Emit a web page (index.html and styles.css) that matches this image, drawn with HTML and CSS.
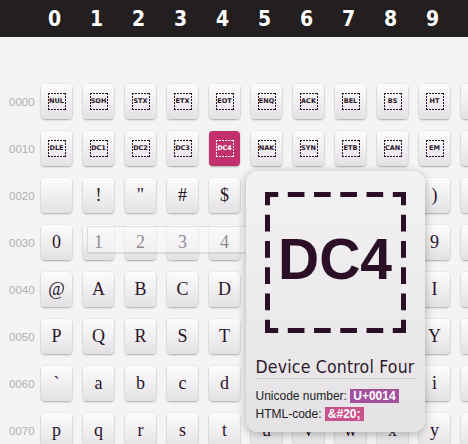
FILE: index.html
```html
<!DOCTYPE html>
<html>
<head>
<meta charset="utf-8">
<link rel="stylesheet" href="styles.css">
</head>
<body>
<header class="head">
  <span>0</span><span>1</span><span>2</span><span>3</span><span>4</span><span>5</span><span>6</span><span>7</span><span>8</span><span>9</span>
</header>
<main class="table">
  <div class="row"><span class="lbl">0000</span>
    <div class="key"><span class="cb">NUL</span></div><div class="key"><span class="cb">SOH</span></div><div class="key"><span class="cb">STX</span></div><div class="key"><span class="cb">ETX</span></div><div class="key"><span class="cb">EOT</span></div><div class="key"><span class="cb">ENQ</span></div><div class="key"><span class="cb">ACK</span></div><div class="key"><span class="cb">BEL</span></div><div class="key"><span class="cb">BS</span></div><div class="key"><span class="cb">HT</span></div><div class="key"></div>
  </div>
  <div class="row"><span class="lbl">0010</span>
    <div class="key"><span class="cb">DLE</span></div><div class="key"><span class="cb">DC1</span></div><div class="key"><span class="cb">DC2</span></div><div class="key"><span class="cb">DC3</span></div><div class="key active"><span class="cb">DC4</span></div><div class="key"><span class="cb">NAK</span></div><div class="key"><span class="cb">SYN</span></div><div class="key"><span class="cb">ETB</span></div><div class="key"><span class="cb">CAN</span></div><div class="key"><span class="cb">EM</span></div><div class="key"></div>
  </div>
  <div class="row"><span class="lbl">0020</span>
    <div class="key"></div><div class="key">!</div><div class="key">"</div><div class="key">#</div><div class="key">$</div><div class="key"></div><div class="key"></div><div class="key"></div><div class="key"></div><div class="key">)</div><div class="key"></div>
  </div>
  <div class="row"><span class="lbl">0030</span>
    <div class="key">0</div><div class="key">1</div><div class="key">2</div><div class="key">3</div><div class="key">4</div><div class="key"></div><div class="key"></div><div class="key"></div><div class="key"></div><div class="key">9</div><div class="key"></div>
  </div>
  <div class="row"><span class="lbl">0040</span>
    <div class="key">@</div><div class="key">A</div><div class="key">B</div><div class="key">C</div><div class="key">D</div><div class="key"></div><div class="key"></div><div class="key"></div><div class="key"></div><div class="key">I</div><div class="key"></div>
  </div>
  <div class="row"><span class="lbl">0050</span>
    <div class="key">P</div><div class="key">Q</div><div class="key">R</div><div class="key">S</div><div class="key">T</div><div class="key"></div><div class="key"></div><div class="key"></div><div class="key"></div><div class="key">Y</div><div class="key"></div>
  </div>
  <div class="row"><span class="lbl">0060</span>
    <div class="key">`</div><div class="key">a</div><div class="key">b</div><div class="key">c</div><div class="key">d</div><div class="key"></div><div class="key"></div><div class="key"></div><div class="key"></div><div class="key">i</div><div class="key"></div>
  </div>
  <div class="row"><span class="lbl">0070</span>
    <div class="key">p</div><div class="key">q</div><div class="key">r</div><div class="key">s</div><div class="key">t</div><div class="key">u</div><div class="key">v</div><div class="key">w</div><div class="key">x</div><div class="key">y</div><div class="key"></div>
  </div>
</main>
<div class="sel"></div>
<div class="tip">
  <div class="bigbox">
    <svg class="dash" width="141" height="141" viewBox="0 0 141 141"><rect x="2.5" y="2.5" width="136" height="136" fill="none" stroke="#2b0f27" stroke-width="5" stroke-dasharray="21.4 9.6 16.65 9.6 16.65 9.6 16.65 9.6 16.65 9.6" stroke-dashoffset="10.7"/></svg>
    <span class="big">DC4</span>
  </div>
  <div class="title">Device Control Four</div>
  <div class="info">Unicode number: <span class="badge b1">U+0014</span></div>
  <div class="info">HTML-code: <span class="badge b2">&amp;#20;</span></div>
</div>
</body>
</html>
```
FILE: styles.css
```css
html, body {
  margin: 0;
  height: 100%;
}
body {
  background: #f4f4f4;
  font-family: "Liberation Sans", Arial, sans-serif;
  overflow: hidden;
  position: relative;
}
.head {
  height: 37px;
  background: #231f20;
  display: flex;
  align-items: center;
  padding-left: 39px;
  gap: 11px;
}
.head span {
  flex: none;
  width: 31px;
  text-align: center;
  color: #fff;
  font-weight: bold;
  font-size: 21px;
  font-family: "Liberation Sans Narrow", "DejaVu Sans Condensed", "Roboto", sans-serif;
  font-stretch: condensed;
}
.table {
  padding-top: 47px;
  display: flex;
  flex-direction: column;
  gap: 12px;
}
.row {
  display: flex;
  align-items: center;
  gap: 11px;
  height: 35px;
}
.lbl {
  flex: none;
  width: 30px;
  box-sizing: border-box;
  padding-left: 9px;
  white-space: nowrap;
  font-size: 11.5px;
  color: #b1aeb1;
}
.key {
  flex: none;
  width: 31px;
  height: 35px;
  border-radius: 4px;
  background: linear-gradient(#fdfcfd, #e3e1e4);
  box-shadow: 0 1px 2px rgba(0, 0, 0, 0.28), 0 0 0 0.5px rgba(0, 0, 0, 0.06);
  display: flex;
  align-items: center;
  justify-content: center;
  font-family: "Liberation Serif", "Times New Roman", serif;
  font-size: 18px;
  color: #2b1428;
}
.cb {
  width: 18px;
  height: 17px;
  margin-top: -1px;
  box-sizing: border-box;
  display: flex;
  align-items: center;
  justify-content: center;
  font-family: "DejaVu Sans", sans-serif;
  font-weight: bold;
  font-size: 6.5px;
  color: #2b1428;
  background:
    repeating-linear-gradient(90deg, #2b1428 0 2px, transparent 2px 3px) top / 100% 1px no-repeat,
    repeating-linear-gradient(90deg, #2b1428 0 2px, transparent 2px 3px) bottom / 100% 1px no-repeat,
    repeating-linear-gradient(180deg, #2b1428 0 2px, transparent 2px 3px) left / 1px 100% no-repeat,
    repeating-linear-gradient(180deg, #2b1428 0 2px, transparent 2px 3px) right / 1px 100% no-repeat;
}
.key.active {
  background: #c2306d;
  box-shadow: 0 1px 2px rgba(0, 0, 0, 0.3);
}
.key.active .cb {
  color: #fff;
  background:
    repeating-linear-gradient(90deg, #fff 0 2px, transparent 2px 3px) top / 100% 1px no-repeat,
    repeating-linear-gradient(90deg, #fff 0 2px, transparent 2px 3px) bottom / 100% 1px no-repeat,
    repeating-linear-gradient(180deg, #fff 0 2px, transparent 2px 3px) left / 1px 100% no-repeat,
    repeating-linear-gradient(180deg, #fff 0 2px, transparent 2px 3px) right / 1px 100% no-repeat;
}
.sel {
  position: absolute;
  left: 87px;
  top: 226px;
  width: 162px;
  height: 25px;
  background: rgba(250, 250, 250, 0.5);
  border: 1px solid rgba(0, 0, 0, 0.1);
  box-shadow: 0 1px 1px rgba(0, 0, 0, 0.08);
}
.tip {
  position: absolute;
  left: 245.5px;
  top: 170.5px;
  width: 179px;
  height: 261px;
  box-sizing: border-box;
  border-radius: 12px;
  background: linear-gradient(#f3f2f3, #e5e2e5);
  box-shadow: 0 2px 10px rgba(0, 0, 0, 0.3);
  padding: 21px 0 0 10px;
  display: flex;
  flex-direction: column;
  align-items: flex-start;
}
.bigbox {
  margin-left: 9px;
  display: grid;
  width: 141px;
  height: 141px;
}
.dash, .big {
  grid-area: 1 / 1;
}
.big {
  align-self: center;
  justify-self: center;
  padding-bottom: 7px;
  font-family: "Liberation Sans", Arial, sans-serif;
  font-weight: bold;
  font-size: 57px;
  color: #2b0f27;
}
.title {
  margin-top: 24px;
  font-family: "Liberation Sans Narrow", "DejaVu Sans Condensed", "Roboto", sans-serif;
  font-stretch: condensed;
  font-size: 17.5px;
  letter-spacing: 0.2px;
  line-height: 20px;
  color: #2d1a2b;
  padding-bottom: 1px;
  border-bottom: 1px solid #cdc9cd;
}
.title + .info {
  margin-top: 8px;
}
.info {
  font-size: 12px;
  line-height: 18.6px;
  color: #222;
}
.badge {
  display: inline-block;
  padding: 1px 3px;
  line-height: 12px;
  font-weight: bold;
  color: #fff;
}
.b1 {
  background: #a3519d;
}
.b2 {
  background: #c9528d;
}
```
